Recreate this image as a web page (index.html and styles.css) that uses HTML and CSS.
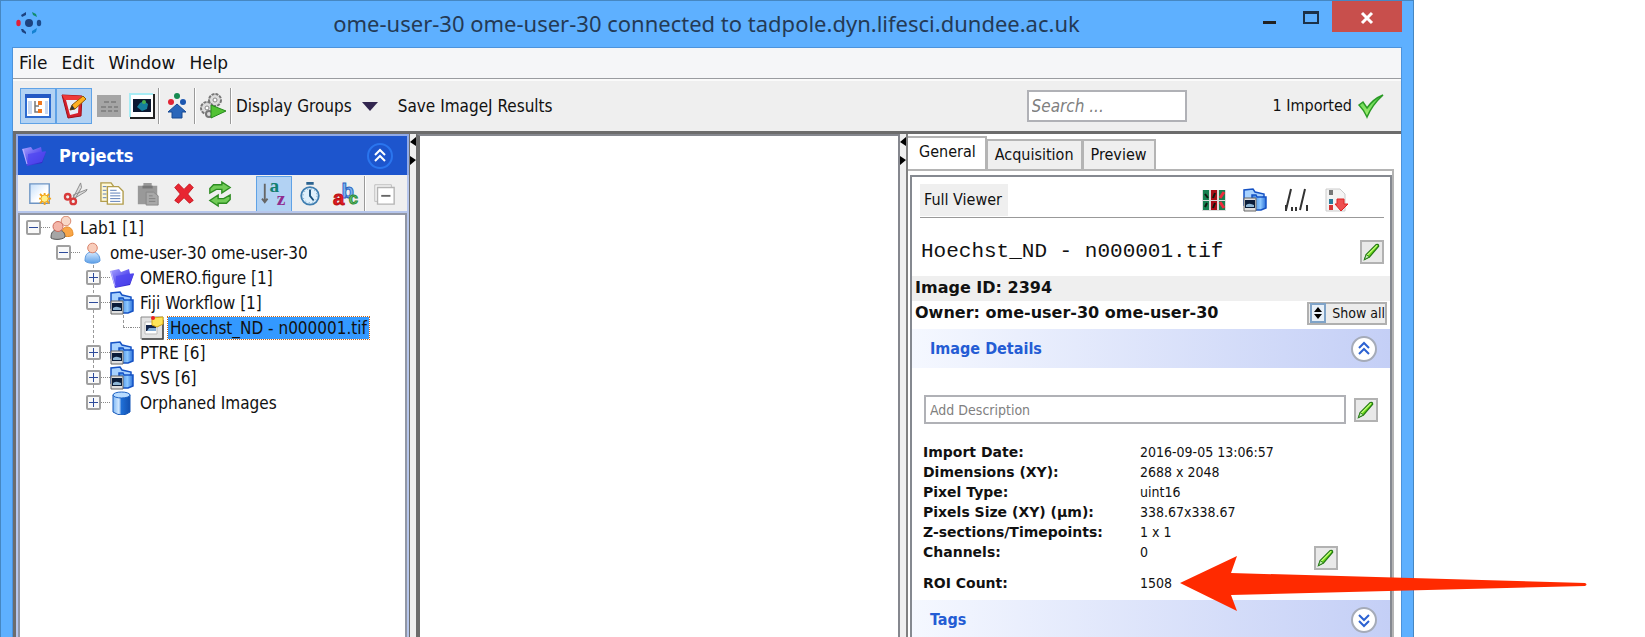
FILE: index.html
```html
<!DOCTYPE html>
<html lang="en">
<head>
<meta charset="utf-8">
<title>ome-user-30 connected to tadpole.dyn.lifesci.dundee.ac.uk</title>
<link rel="stylesheet" href="styles.css">
</head>
<body>
<svg class="defs" aria-hidden="true">
  <defs>
    <linearGradient id="g-folder" x1="0" y1="0" x2="1" y2="1"><stop offset="0" stop-color="#a9a4ff"/><stop offset=".5" stop-color="#5a50ef"/><stop offset="1" stop-color="#1a0fb0"/></linearGradient>
    <linearGradient id="g-blue" x1="0" y1="0" x2="1" y2="0"><stop offset="0" stop-color="#2f7be0"/><stop offset=".6" stop-color="#8cc8ff"/><stop offset="1" stop-color="#2a6fd8"/></linearGradient>
    <linearGradient id="g-can" x1="0" y1="0" x2="1" y2="0"><stop offset="0" stop-color="#7fb8f5"/><stop offset=".35" stop-color="#d3e9ff"/><stop offset=".5" stop-color="#1f6fd6"/><stop offset="1" stop-color="#1250b0"/></linearGradient>
    <linearGradient id="g-shirt" x1="0" y1="0" x2="0" y2="1"><stop offset="0" stop-color="#d6eaff"/><stop offset="1" stop-color="#5c9fe8"/></linearGradient>
    <linearGradient id="g-paper" x1="0" y1="0" x2="1" y2="1"><stop offset="0" stop-color="#c4defa"/><stop offset=".6" stop-color="#ffffff"/></linearGradient>
    <linearGradient id="g-check" x1="0" y1="0" x2="0" y2="1"><stop offset="0" stop-color="#4fd04f"/><stop offset="1" stop-color="#a8f070"/></linearGradient>
  </defs>
  <symbol id="i-folder" viewBox="0 0 24 24"><path d="M0 5l9-2 2 3 8-3 1 5 4 0-4 11-15 3z" fill="url(#g-folder)"/><path d="M6 10l18-3-4 11-14 3z" fill="#5148f0" opacity=".8"/><path d="M1 5l4 15" stroke="#b8b4ff" fill="none"/></symbol>
  <symbol id="i-dataset" viewBox="0 0 24 24"><path d="M1 17V2l9-1 2 3 9 2v3z" fill="#a8d2ff" stroke="#1552c4" stroke-width="1.500"/><path d="M9 7h4l1 2h9v11l-5 2H9z" fill="url(#g-blue)" stroke="#1552c4" stroke-width="1.500"/><path d="M1 10h12v13H1z" fill="#e0e0e0" stroke="#666"/><path d="M2 12h10v8H2z" fill="#0a1c38"/><path d="M3 17q3-2 5-1l3 1v2H3z" fill="#8fb7d6"/></symbol>
  <symbol id="i-user" viewBox="0 0 24 24"><path d="M5 20c0-6 2-9 7-9s8 3 8 9c-3 3-12 3-15 0z" fill="url(#g-shirt)" stroke="#5e9be0"/><circle cx="12.500" cy="7" r="4.800" fill="#f8cdbb" stroke="#d9846c"/></symbol>
  <symbol id="i-group" viewBox="0 0 24 24"><path d="M12 19c0-5 1-8 5-8s6 3 6 8c-2 2-9 2-11 0z" fill="#f9a648" stroke="#e68a22"/><circle cx="16" cy="5" r="4.800" fill="#f8d8c8" stroke="#d98a70"/><path d="M1 22c0-6 2-8 7-8s7 3 7 7c-3 3-11 3-14 1z" fill="#a5a5a5" stroke="#555"/><circle cx="8" cy="10.500" r="5" fill="#f4b5a8" stroke="#cc6a5c"/></symbol>
  <symbol id="i-image" viewBox="0 0 24 24"><path d="M1 1h22v22H1z" fill="#e4e4e4" stroke="#8a8a8a"/><path d="M2 23h21V4" fill="none" stroke="#444" stroke-width="1.500"/><path d="M5 6h12v12H5z" fill="#fff" stroke="#bbb"/><path d="M6 9h10v6H6z" fill="#15264a"/><path d="M9 12h7v3H7z" fill="#85aed6"/><path d="M12 2l11-1v7l-6 3-5-2z" fill="#ffe558" stroke="#d7a713"/><circle cx="13" cy="2" r="2" fill="#e22"/></symbol>
  <symbol id="i-can" viewBox="0 0 24 24"><path d="M3 4v17q9 6 17 0V4z" fill="url(#g-can)" stroke="#1457b8"/><ellipse cx="11.500" cy="4" rx="8.500" ry="3" fill="#b9dcff" stroke="#1d62c4"/></symbol>
  <symbol id="i-pencil" viewBox="0 0 24 24"><path d="M3 21l2-6L17 3q3-1 3 2L9 18z" fill="#6edb1e" stroke="#257a14" stroke-width="1.500"/><path d="M6 16L18 4" stroke="#c8ff80" stroke-width="1.500"/><path d="M3 21l2-6 4 3z" fill="#bfe8b0" stroke="#257a14"/></symbol>
  <symbol id="i-up" viewBox="0 0 22 22"><path d="M6 10l5-5 5 5M6 16l5-5 5 5" fill="none" stroke="currentColor" stroke-width="2"/></symbol>
  <symbol id="i-down" viewBox="0 0 22 22"><path d="M6 6l5 5 5-5M6 12l5 5 5-5" fill="none" stroke="currentColor" stroke-width="2"/></symbol>
</svg>

<div class="window">
  <header class="titlebar">
    <svg class="logo" viewBox="0 0 26 24" aria-hidden="true"><circle cx="13" cy="12" r="4" fill="#1c4280"/><ellipse cx="2.500" cy="12" rx="2.200" ry="3.300" fill="#e21f37"/><ellipse cx="23" cy="12" rx="2.200" ry="3.200" fill="#1d4b8c"/><path d="M5 4l5-3v3L6 6zM5 18l2 0 3 3v2l-4-2z" fill="#1c4280"/><path d="M16 1l4 2 1 3-4-2z" fill="#118c6d"/><path d="M16 23v-3l5-3-1 4z" fill="#1482d2"/></svg>
    <h1>ome-user-30 ome-user-30 connected to tadpole.dyn.lifesci.dundee.ac.uk</h1>
    <div class="winbtns">
      <button aria-label="Minimize"><svg viewBox="0 0 16 16"><path d="M2 12h13v3H2z" fill="#222"/></svg></button>
      <button aria-label="Maximize"><svg viewBox="0 0 16 16"><path d="M1 3h14v11H1z" fill="none" stroke="#1c3148" stroke-width="2"/><path d="M0 2h16v3H0z" fill="#1c3148"/></svg></button>
      <button class="close" aria-label="Close"><svg viewBox="0 0 16 16"><path d="M3 4l10 10M13 4L3 14" stroke="#fff" stroke-width="3"/></svg></button>
    </div>
  </header>

  <div class="client">
    <nav class="menubar"><button>File</button><button>Edit</button><button>Window</button><button>Help</button></nav>

    <div class="toolbar">
      <button class="tool on" aria-label="Tree"><svg viewBox="0 0 26 26"><path d="M1 2h24v22H1z" fill="#fff" stroke="#2c6bd0" stroke-width="2"/><path d="M0 1h26v4H0z" fill="#2459c4"/><path d="M3 8h4v13H3zM20 8h3v13h-3z" fill="#c8d8f0"/><path d="M10 8v11h4M10 13h4" stroke="#777" fill="none" stroke-width="1.500"/><path d="M13 8h4v4h-4zM13 16h4v4h-4z" fill="#f07820"/></svg></button>
      <button class="tool on" aria-label="Annotate"><svg viewBox="0 0 26 26"><path d="M1 2l20 1-1 20-13 2z" fill="#d51f2c" stroke="#9c1018"/><path d="M5 7l13-1-1 14-8 2z" fill="#e8eef8"/><path d="M1 2l20 1-1 4L4 7z" fill="#ee3a3a"/><path d="M9 17l2-5L22 3l3 3-11 10z" fill="#ffb020" stroke="#8c5a08"/><path d="M9 17l2-5 3 4z" fill="#333"/></svg></button>
      <button class="tool" aria-label="Metadata"><svg viewBox="0 0 26 26"><path d="M1 2h24v22H1z" fill="#a5a5a5"/><path d="M8 9h5M15 9h5M5 14h5M12 14h4M18 14h4M5 18h5M12 18h4M18 18h4" stroke="#858585" stroke-width="2"/></svg></button>
      <button class="tool" aria-label="Viewer"><svg viewBox="0 0 26 26"><path d="M1 1h24v24H1z" fill="#fff"/><path d="M1 24V1h23" fill="none" stroke="#a8ecf4" stroke-width="2"/><path d="M1 25h24V1" fill="none" stroke="#222" stroke-width="2"/><path d="M4 6h18v13H4z" fill="#0b1830"/><path d="M8 14l3-4 4-2 4 3-1 5-5 2z" fill="#157f9c"/><circle cx="15" cy="9" r="2" fill="#46b050"/></svg></button>
      <i class="sep"></i>
      <button class="tool tight" aria-label="Import"><svg viewBox="0 0 26 26"><circle cx="13" cy="3" r="3" fill="#168a50"/><circle cx="7" cy="9" r="3" fill="#e22434"/><circle cx="19" cy="9" r="3" fill="#1c57b0"/><path d="M13 11l9 8h-4v6H8v-6H4z" fill="#2a66ba" stroke="#174a94"/></svg></button>
      <i class="sep"></i>
      <button class="tool tight" aria-label="Run script"><svg viewBox="0 0 26 26"><g fill="#ddd" stroke="#777" stroke-width="2"><circle cx="15" cy="7" r="6" stroke-dasharray="3 1"/><circle cx="7" cy="15" r="6" stroke-dasharray="3 1"/><circle cx="9" cy="21" r="3"/></g><circle cx="15" cy="7" r="2" fill="#fff" stroke="#888"/><circle cx="7" cy="15" r="2" fill="#fff" stroke="#888"/><path d="M11 12l15 6-15 7z" fill="#52c234" stroke="#258a1c"/></svg></button>
      <i class="sep"></i>
      <button class="text">Display Groups <svg class="caret" viewBox="0 0 16 9"><path d="M0 0h16L8 9z" fill="#33264f"/></svg></button>
      <button class="text save">Save ImageJ Results</button>
      <input class="search" type="text" placeholder="Search ..." aria-label="Search">
      <span class="imported">1 Imported <svg viewBox="0 0 26 24"><path d="M1 11l4-3 4 6Q15 5 25 1 14 11 9 23 6 16 1 11z" fill="url(#g-check)" stroke="#2a9a24" stroke-width="1.500"/></svg></span>
    </div>

    <main class="panes">
      <section class="projects">
        <header class="pane-head">
          <svg><use href="#i-folder"/></svg><h2>Projects</h2>
          <button class="round dark" aria-label="Collapse panel"><svg><use href="#i-up"/></svg></button>
        </header>
        <div class="minibar">
          <button class="tool" aria-label="New"><svg viewBox="0 0 26 26"><path d="M2 2h21v21H2z" fill="url(#g-paper)" stroke="#6d94c4" stroke-width="1.500"/><path d="M18 12v13M12 18h13M13 13l10 10M23 13L13 23" stroke="#f3a51b" stroke-width="2"/><circle cx="18" cy="18" r="4" fill="#fff08a" stroke="#f0a010"/></svg></button>
          <button class="tool" aria-label="Cut"><svg viewBox="0 0 26 26"><path d="M10 17L18 1l1 5-7 12zM10 14l15-6-1 2-13 8z" fill="#ddd" stroke="#888"/><g fill="none" stroke="#d83a3a" stroke-width="2.500"><circle cx="4" cy="16" r="3"/><circle cx="10" cy="21" r="3"/></g></svg></button>
          <button class="tool" aria-label="Copy"><svg viewBox="0 0 26 26"><path d="M1 1h11l3 4v16H1z" fill="#fff9d8" stroke="#b29d4c" stroke-width="1.500"/><path d="M8 5h12l5 5v14H8z" fill="#fff" stroke="#b29d4c" stroke-width="1.500"/><path d="M11 9h7M11 12h11M11 15h11M11 18h11M11 21h11M3 5h4M3 9h4M3 13h4M3 17h4" stroke="#5577b4"/></svg></button>
          <button class="tool" aria-label="Paste"><svg viewBox="0 0 26 26"><path d="M2 4h6V1h9v3h6v20H2z" fill="#999"/><path d="M7 4h11v3H7z" fill="#777"/><path d="M11 11h8l5 4v10H11z" fill="#a8a8a8" stroke="#888"/><path d="M14 15h4M14 18h7M14 21h7" stroke="#808080"/></svg></button>
          <button class="tool" aria-label="Delete"><svg viewBox="0 0 26 26"><path d="M3 6l4-4 6 6 6-6 4 4-6 7 6 7-4 3-6-6-6 6-4-3 6-7z" fill="#e82632" stroke="#c4141c"/></svg></button>
          <button class="tool" aria-label="Refresh"><svg viewBox="0 0 26 26"><path d="M2 12V7l4-4h9V0l9 6-9 6V8H9z" fill="#72cc58" stroke="#2d8c22" stroke-width="1.500"/><path d="M24 14v5l-4 4h-9v3l-9-6 9-6v4h6z" fill="#72cc58" stroke="#2d8c22" stroke-width="1.500"/></svg></button>
          <button class="tool on gap" aria-label="Sort by name"><svg viewBox="0 0 26 26"><path d="M3 2v19M0 18l3 4 3-4" fill="none" stroke="#666" stroke-width="2"/><text class="serif" x="8" y="11" font-size="21" fill="#128070">a</text><text class="serif" x="16" y="25" font-size="21" fill="#902c8e">z</text></svg></button>
          <button class="tool" aria-label="Sort by date"><svg viewBox="0 0 26 26"><path d="M9 0h8v3H9z" fill="#2c6390"/><circle cx="13" cy="15" r="9.500" fill="#dff0fc" stroke="#3f7eb0" stroke-width="2"/><path d="M13 8v7l4 5" fill="none" stroke="#174f7c" stroke-width="2"/><circle cx="13" cy="15" r="7.500" fill="none" stroke="#5e91b8" stroke-dasharray="1 3"/></svg></button>
          <button class="tool" aria-label="Show names"><svg viewBox="0 0 26 26"><text class="sans" x="8" y="17" font-size="22" fill="#7db4f0" stroke="#2a62c0">b</text><text class="sans" x="16" y="24" font-size="18" fill="#68c070" stroke="#278a34">c</text><text class="sans" x="-1" y="25" font-size="22" fill="#e41b22" stroke="#b80d12">a</text></svg></button>
          <i class="sep"></i>
          <button class="tool" aria-label="Collapse all"><svg viewBox="0 0 26 26"><path d="M3 3h18v18H3z" fill="#f4f4f4" stroke="#bbb"/><path d="M6 6h18v18H6z" fill="#fff" stroke="#b4b4b4" stroke-width="1.500"/><path d="M10 15h10" stroke="#666" stroke-width="2"/></svg></button>
        </div>
        <div class="treebox">
          <ul class="tree">
            <li>
              <div class="row"><button class="exp" aria-label="Collapse"></button><i class="dots"></i><svg><use href="#i-group"/></svg><span>Lab1 [1]</span></div>
              <ul>
                <li>
                  <div class="row"><button class="exp" aria-label="Collapse"></button><i class="dots"></i><svg><use href="#i-user"/></svg><span>ome-user-30 ome-user-30</span></div>
                  <ul class="guided">
                    <li><div class="row"><button class="exp plus" aria-label="Expand"></button><i class="dots"></i><svg><use href="#i-folder"/></svg><span>OMERO.figure [1]</span></div></li>
                    <li>
                      <div class="row"><button class="exp" aria-label="Collapse"></button><i class="dots"></i><svg><use href="#i-dataset"/></svg><span>Fiji Workflow [1]</span></div>
                      <ul class="guided"><li><div class="row"><i class="leaf"></i><i class="dots"></i><svg><use href="#i-image"/></svg><span class="selected">Hoechst_ND - n000001.tif</span></div></li></ul>
                    </li>
                    <li><div class="row"><button class="exp plus" aria-label="Expand"></button><i class="dots"></i><svg><use href="#i-dataset"/></svg><span>PTRE [6]</span></div></li>
                    <li><div class="row"><button class="exp plus" aria-label="Expand"></button><i class="dots"></i><svg><use href="#i-dataset"/></svg><span>SVS [6]</span></div></li>
                    <li><div class="row"><button class="exp plus" aria-label="Expand"></button><i class="dots"></i><svg><use href="#i-can"/></svg><span>Orphaned Images</span></div></li>
                  </ul>
                </li>
              </ul>
            </li>
          </ul>
        </div>
      </section>

      <div class="splitter"><svg viewBox="0 0 6 28"><path d="M6 0v9L0 5zM0 19v9l6-5z"/></svg></div>
      <section class="canvas"></section>
      <div class="splitter"><svg viewBox="0 0 6 28"><path d="M6 0v9L0 5zM0 19v9l6-5z"/></svg></div>

      <section class="details">
        <div class="tabs"><button class="active">General</button><button>Acquisition</button><button>Preview</button></div>
        <div class="tabpage"><div class="sheet">
          <div class="viewer">
            <button class="full">Full Viewer</button>
            <div class="viewtools">
              <button aria-label="Channels"><svg viewBox="0 0 24 24"><path d="M0 2h24v21H0z" fill="#ddd"/><path d="M1 2h6v10H1zM1 13h6v9H1z" fill="#168050"/><path d="M9 2h6v10H9zM9 13h6v9H9z" fill="#a80c18"/><path d="M17 2h6v10h-6zM17 13h6v9h-6z" fill="#168050"/><path d="M18 10l4-6M18 14l4 6" stroke="#ee2b3d" stroke-width="3"/><path d="M3 6l3 4M5 15l-2 4M11 10l2-5M11 20l2-5" stroke="#0c1810" stroke-width="2"/></svg></button>
              <button aria-label="Containers"><svg><use href="#i-dataset"/></svg></button>
              <button aria-label="File paths"><svg viewBox="0 0 24 24"><path d="M2 22L7 1M16 22l5-21" stroke="#333" stroke-width="2"/><path d="M2 17v6M8 19v4M12 19v4M23 17v6" stroke="#333" stroke-width="2"/></svg></button>
              <button aria-label="Save as"><svg viewBox="0 0 24 24"><path d="M1 1h14l5 5v17H1z" fill="#f4f4f4" stroke="#ccc"/><path d="M4 2h4v5H4z" fill="#777"/><path d="M4 11h4v5H4z" fill="#2a7b9a"/><path d="M4 17h4v5H4z" fill="#d53636"/><path d="M12 11h7v5h4l-7 7-6-7h2z" fill="#ee5050" stroke="#d22"/></svg></button>
            </div>
          </div>
          <div class="name"><span>Hoechst_ND - n000001.tif</span><button class="edit" aria-label="Edit name"><svg><use href="#i-pencil"/></svg></button></div>
          <p class="imageid">Image ID: 2394</p>
          <div class="owner"><p>Owner: ome-user-30 ome-user-30</p><button class="showall"><svg viewBox="0 0 14 18"><path d="M0 0h14v18H0z" fill="#e8f0f8" stroke="#7fa3c8" stroke-width="2"/><path d="M3 8l4-5 4 5zM3 10h8l-4 5z"/></svg>Show all</button></div>
          <header class="section"><h3>Image Details</h3><button class="round" aria-label="Collapse"><svg><use href="#i-up"/></svg></button></header>
          <div class="describe"><input type="text" placeholder="Add Description" aria-label="Description"><button class="edit" aria-label="Edit description"><svg><use href="#i-pencil"/></svg></button></div>
          <table class="facts">
            <tr><th scope="row">Import Date:</th><td>2016-09-05 13:06:57</td><td></td></tr>
            <tr><th scope="row">Dimensions (XY):</th><td>2688 x 2048</td><td></td></tr>
            <tr><th scope="row">Pixel Type:</th><td>uint16</td><td></td></tr>
            <tr><th scope="row">Pixels Size (XY) (µm):</th><td>338.67x338.67</td><td></td></tr>
            <tr><th scope="row">Z-sections/Timepoints:</th><td>1 x 1</td><td></td></tr>
            <tr class="tall"><th scope="row">Channels:</th><td>0</td><td><button class="edit" aria-label="Edit channels"><svg><use href="#i-pencil"/></svg></button></td></tr>
            <tr><th scope="row">ROI Count:</th><td>1508</td><td></td></tr>
          </table>
          <header class="section"><h3>Tags</h3><button class="round" aria-label="Expand"><svg><use href="#i-down"/></svg></button></header>
        </div></div>
      </section>
    </main>
  </div>
</div>
<svg class="arrow" viewBox="0 0 408 56" aria-hidden="true"><path d="M0 27L57 0l-6 17 354 10q3 1.500 0 3L51 39l6 16z" fill="#ff2a00"/></svg>
</body>
</html>
```
FILE: styles.css
```css
* { box-sizing: border-box; }
body {
  margin: 0;
  background: #fff;
  color: #111;
  font: 17px/20px "DejaVu Sans Condensed", "DejaVu Sans", sans-serif;
  overflow: hidden;
}
h1, h2, h3, p, ul { margin: 0; padding: 0; }
button { font: inherit; color: inherit; border: 0; background: none; padding: 0; }
svg { display: block; flex: none; overflow: visible; }
.defs { position: absolute; width: 0; height: 0; }
.serif { font-family: "Liberation Serif", serif; font-weight: bold; }
.sans { font-family: "Liberation Sans", sans-serif; font-weight: bold; }

.window {
  display: flex;
  flex-direction: column;
  height: 100vh;
  margin-right: 231px;
  padding: 0 11px;
  background: #5eb0ff;
  border: 1px solid #4687c2;
  border-width: 1px 1px 0;
}

.titlebar { display: flex; align-items: flex-start; height: 46px; flex: none; }
.logo { width: 26px; height: 24px; margin: 10px 0 0 4px; }
.titlebar h1 {
  flex: 1;
  padding: 8px 0 0 123px;
  text-align: center;
  font: 22px/28px "Noto Sans", sans-serif;
  color: #243a55;
  white-space: nowrap;
}
.winbtns { display: flex; }
.winbtns button { width: 42px; height: 31px; display: grid; place-items: center; }
.winbtns svg { width: 16px; height: 16px; }
.winbtns .close { width: 70px; background: #c84f4c; }

.client {
  flex: 1;
  min-height: 0;
  display: flex;
  flex-direction: column;
  background: #efefef;
  border: 1px solid #4c93dc;
  border-bottom: 0;
}
.menubar {
  display: flex;
  gap: 14px;
  height: 31px;
  flex: none;
  padding: 0 6px;
  font-family: "DejaVu Sans", sans-serif;
  background: #f5f6f8;
  border-bottom: 1px solid #9a9ca0;
}

.toolbar {
  display: flex;
  align-items: center;
  flex: none;
  height: 52px;
  padding: 0 17px 0 7px;
  border-top: 2px solid #fafafa;
}
.tool { width: 36px; height: 36px; display: grid; place-items: center; flex: none; }
.tool svg { width: 26px; height: 26px; }
.toolbar .tool:nth-of-type(3), .toolbar .tool:nth-of-type(4) { width: 33px; }
.toolbar .tool.tight { width: 34px; }
.tool.on { background: #b2d2f3; border: 1px solid #5fa2e6; }
.sep { width: 2px; height: 36px; background: #9a9a9a; border-right: 1px solid #fff; flex: none; }
.text { display: flex; align-items: center; gap: 10px; margin-left: 4px; white-space: nowrap; }
.caret { width: 16px; height: 9px; }
.save { margin-left: 20px; }
input { font: inherit; background: #fff; border: 2px solid #b0b1b6; border-radius: 0; outline: 0; min-width: 0; }
input::placeholder { color: #808080; opacity: 1; }
.search { width: 160px; height: 32px; margin-left: auto; padding: 0 3px; font-style: italic; }
.imported { display: flex; align-items: center; gap: 6px; margin-left: 86px; font-size: 16px; white-space: nowrap; }
.imported svg { width: 26px; height: 24px; }

.panes {
  flex: 1;
  min-height: 0;
  display: flex;
  border-top: 3px solid #6c6c6c;
  overflow: hidden;
}
.projects {
  width: 397px;
  flex: none;
  display: flex;
  flex-direction: column;
  border-left: 3px solid #6c6c6c;
  border-right: 1px solid #6c6c6c;
}
.pane-head {
  display: flex;
  align-items: center;
  gap: 13px;
  flex: none;
  height: 41px;
  padding: 0 14px 0 4px;
  background: #1d55cd;
  border: 2px solid #90aae8;
  border-bottom: 0;
  color: #fff;
}
.pane-head > svg { width: 24px; height: 24px; }
.pane-head h2 { font-size: 18px; line-height: 22px; flex: 1; }
.round {
  width: 26px;
  height: 26px;
  flex: none;
  border: 2px solid #a5abb8;
  border-radius: 50%;
  background: #fff;
  color: #2c62d2;
  display: grid;
  place-items: center;
}
.round svg { width: 22px; height: 22px; }
.round.dark { border-color: #2a75ee; background: transparent; color: #fff; }
.minibar {
  display: flex;
  flex: none;
  height: 38px;
  align-items: center;
  padding-left: 4px;
  border: 2px solid #b6c6ec;
  border-width: 0 2px;
}
.minibar .tool svg { width: 24px; height: 24px; }
.minibar .gap { margin-left: 18px; }
.treebox {
  flex: 1;
  min-height: 0;
  margin: 0 2px;
  padding-left: 6px;
  background: #fff;
  border: 2px solid #9297a5;
  border-bottom: 0;
  outline: 2px solid #b6c6ec;
}
.tree, .tree ul { list-style: none; }
.tree ul { position: relative; padding-left: 30px; }
.guided::before {
  content: "";
  position: absolute;
  left: 37px;
  top: 0;
  bottom: 12px;
  border-left: 1px dashed #999;
}
.row { display: flex; align-items: center; height: 25px; white-space: nowrap; }
.row svg { width: 24px; height: 24px; }
.row span { margin-left: 4px; padding: 1px 2px; }
.exp {
  position: relative;
  width: 15px;
  height: 15px;
  flex: none;
  border: 2px solid #a0a0a0;
  border-radius: 2px;
  background: linear-gradient(#2d4a9a, #2d4a9a) center / 9px 1px no-repeat, #f8f8f8;
}
.exp.plus {
  background:
    linear-gradient(#2d4a9a, #2d4a9a) center / 9px 1px no-repeat,
    linear-gradient(#2d4a9a, #2d4a9a) center / 1px 9px no-repeat,
    #f8f8f8;
}
.dots { width: 9px; border-top: 1px dotted #888; flex: none; }
.leaf { width: 8px; margin-left: 7px; border-top: 1px dotted #888; }
.selected { background: #3399ff; outline: 1px dotted #c86414; }

.splitter { width: 6px; flex: none; background: #efefef; padding-top: 3px; }
.splitter svg { width: 6px; height: 28px; }
.canvas {
  flex: 1;
  background: #fff;
  border: 2px solid #85878e;
  border-left: 4px solid #6c6c6c;
  border-bottom: 0;
}
.details {
  width: 495px;
  flex: none;
  display: flex;
  flex-direction: column;
  padding: 2px 7px 0 0;
  font-size: 16px;
  background: #fff;
  border-left: 2px solid #808080;
}
.tabs { display: flex; align-items: flex-end; height: 33px; flex: none; }
.tabs button { height: 30px; padding: 0 7px; border: 2px solid #b4b4b4; border-bottom: 0; background: #efefef; }
.tabs button + button { margin-left: -1px; }
.tabs .active { height: 33px; padding: 0 9px 4px 11px; background: #fff; border-left: 0; }
.tabpage { flex: 1; min-height: 0; padding: 4px 0 0 2px; border: 2px solid #b4b4b4; border-width: 2px 2px 0 0; }
.sheet { height: 100%; border: 2px solid #858990; border-bottom: 0; overflow: hidden; }
.viewer {
  display: flex;
  align-items: center;
  justify-content: space-between;
  height: 41px;
  margin: 0 6px 0 8px;
  padding-top: 6px;
  border-bottom: 1px solid #999;
}
.full { height: 32px; padding: 0 6px 0 4px; background: #efefef; }
.viewtools { display: flex; gap: 17px; padding-right: 35px; }
.viewtools svg { width: 24px; height: 24px; }
.name {
  display: flex;
  align-items: center;
  justify-content: space-between;
  height: 58px;
  margin: 0 6px 0 9px;
  padding-top: 9px;
  font: 21px/24px "Liberation Mono", monospace;
}
.edit { width: 24px; height: 24px; border: 2px solid #b2b2b2; background: #e9e9e9; display: grid; place-items: center; flex: none; }
.edit svg { width: 20px; height: 20px; }
.imageid, .owner {
  height: 25px;
  padding: 1px 3px;
  font-family: "DejaVu Sans", sans-serif;
  font-weight: bold;
}
.imageid { background: #efefef; line-height: 22px; }
.owner { display: flex; align-items: center; justify-content: space-between; height: 28px; padding-bottom: 5px; }
.showall {
  display: flex;
  align-items: center;
  gap: 7px;
  height: 23px;
  padding: 0 0 0 2px;
  font: 14px/18px "DejaVu Sans Condensed", "DejaVu Sans", sans-serif;
  border: 2px solid #b0b0b0;
  background: #ececec;
}
.showall svg { width: 14px; height: 18px; }
.section {
  display: flex;
  align-items: center;
  justify-content: space-between;
  height: 39px;
  padding: 0 13px 0 18px;
  background: linear-gradient(90deg, #f5f8ff, #c4cff6);
  color: #245cd4;
}
.section h3 { font-size: 16px; line-height: 20px; }
.describe { display: flex; gap: 8px; align-items: center; margin: 27px 12px 0; }
.describe input { flex: 1; height: 29px; padding: 0 4px; font-size: 14px; }
.facts {
  width: 100%;
  margin: 18px 0 7px;
  border-collapse: collapse;
  font-size: 14px;
  line-height: 20px;
}
.facts th, .facts td { padding: 0; text-align: left; vertical-align: top; height: 20px; }
.facts th { width: 228px; padding-left: 11px; font-family: "DejaVu Sans", sans-serif; }
.facts .tall td, .facts .tall th { height: 31px; }
.facts td:last-child { width: 76px; }
.facts .edit { margin-top: 4px; }

.arrow { position: absolute; left: 1180px; top: 556px; width: 408px; height: 56px; }
```
